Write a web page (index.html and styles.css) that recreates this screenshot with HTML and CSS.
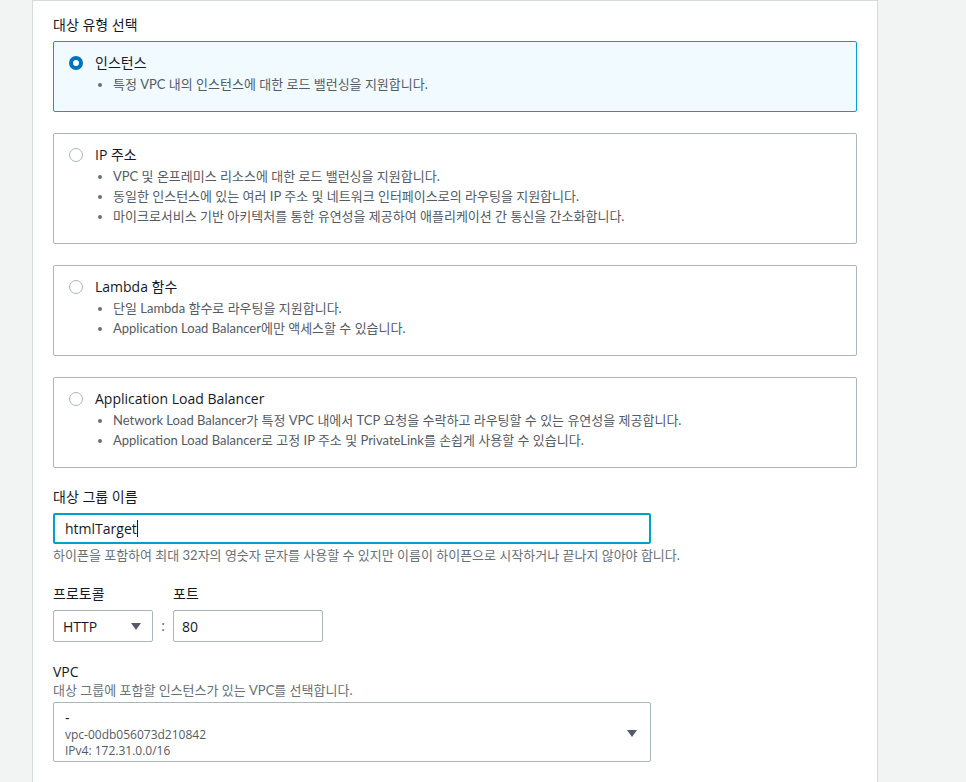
FILE: index.html
```html
<html>
    <head>
        <meta name="viewport" content="width=device-width, initial-scale=1.0">
        <title>대상 그룹 생성</title>
        <link rel="stylesheet" href="styles.css">
    </head>
    <body>
        <div class="panel">
            <div class="section-title">대상 유형 선택</div>
            <div class="tiles">
                <label class="tile selected">
                    <span class="radio"></span>
                    <div class="tile-body">
                        <div class="tile-title">인스턴스</div>
                        <ul>
                            <li>특정 VPC 내의 인스턴스에 대한 로드 밸런싱을 지원합니다.</li>
                        </ul>
                    </div>
                </label>
                <label class="tile">
                    <span class="radio"></span>
                    <div class="tile-body">
                        <div class="tile-title">IP 주소</div>
                        <ul>
                            <li>VPC 및 온프레미스 리소스에 대한 로드 밸런싱을 지원합니다.</li>
                            <li>동일한 인스턴스에 있는 여러 IP 주소 및 네트워크 인터페이스로의 라우팅을 지원합니다.</li>
                            <li>마이크로서비스 기반 아키텍처를 통한 유연성을 제공하여 애플리케이션 간 통신을 간소화합니다.</li>
                        </ul>
                    </div>
                </label>
                <label class="tile">
                    <span class="radio"></span>
                    <div class="tile-body">
                        <div class="tile-title">Lambda 함수</div>
                        <ul>
                            <li>단일 Lambda 함수로 라우팅을 지원합니다.</li>
                            <li>Application Load Balancer에만 액세스할 수 있습니다.</li>
                        </ul>
                    </div>
                </label>
                <label class="tile">
                    <span class="radio"></span>
                    <div class="tile-body">
                        <div class="tile-title">Application Load Balancer</div>
                        <ul>
                            <li>Network Load Balancer가 특정 VPC 내에서 TCP 요청을 수락하고 라우팅할 수 있는 유연성을 제공합니다.</li>
                            <li>Application Load Balancer로 고정 IP 주소 및 PrivateLink를 손쉽게 사용할 수 있습니다.</li>
                        </ul>
                    </div>
                </label>
            </div>

            <div class="field name-field">
                <div class="field-label">대상 그룹 이름</div>
                <div class="text-input focused">htmlTarget<span class="caret"></span></div>
                <div class="hint">하이픈을 포함하여 최대 32자의 영숫자 문자를 사용할 수 있지만 이름이 하이픈으로 시작하거나 끝나지 않아야 합니다.</div>
            </div>

            <div class="field proto-row">
                <div class="proto-col">
                    <div class="field-label">프로토콜</div>
                    <div class="select small-select">
                        <span>HTTP</span>
                        <span class="arrow"></span>
                    </div>
                </div>
                <div class="colon">:</div>
                <div class="port-col">
                    <div class="field-label">포트</div>
                    <div class="text-input port-input">80</div>
                </div>
            </div>

            <div class="field vpc-field">
                <div class="field-label">VPC</div>
                <div class="hint vpc-hint">대상 그룹에 포함할 인스턴스가 있는 VPC를 선택합니다.</div>
                <div class="select vpc-select">
                    <div class="vpc-lines">
                        <div class="vpc-name">-</div>
                        <div class="vpc-sub">vpc-00db056073d210842</div>
                        <div class="vpc-sub">IPv4: 172.31.0.0/16</div>
                    </div>
                    <span class="arrow"></span>
                </div>
            </div>
        </div>
    </body>
</html>
```

FILE: styles.css
```css
html, body{
    margin: 0px;
    padding: 0px;
    height: 100%;
    overflow: hidden;
}
body{
    background-color: #f2f3f3;
    font-family: 'Open Sans', 'Noto Sans CJK KR', sans-serif;
    color: #16191f;
}
.panel{
    margin-left: 32px;
    width: 846px;
    min-height: 100%;
    background-color: white;
    border: 1px solid #d5dbdb;
    border-bottom: none;
    padding: 14px 20px 0px 20px;
    box-sizing: border-box;
}
.section-title{
    font-size: 14px;
    line-height: 20px;
}
.tiles{
    display: flex;
    flex-direction: column;
    gap: 21px;
    margin-top: 6px;
    width: 804px;
}
.tile{
    display: flex;
    align-items: flex-start;
    gap: 12px;
    border: 1px solid #aab7b8;
    border-radius: 2px;
    padding: 10px 15px 17px 15px;
    background-color: white;
}
.tile.selected{
    border-color: #00a1c9;
    background-color: #f1faff;
}
.radio{
    flex: none;
    width: 14px;
    height: 14px;
    margin-top: 4px;
    border: 1px solid #aab7b8;
    border-radius: 50%;
    box-sizing: border-box;
    background-color: white;
}
.tile.selected .radio{
    border: 4px solid #0073bb;
}
.tile-title{
    font-size: 14px;
    line-height: 22px;
}
.tile ul{
    list-style: none;
    margin: 0px;
    padding: 0px;
}
.tile li{
    position: relative;
    font-family: 'Lato', 'Noto Sans CJK KR', sans-serif;
    font-size: 13px;
    line-height: 20px;
    color: #545b64;
    padding-left: 18px;
}
.tile li::before{
    content: '';
    position: absolute;
    left: 3px;
    top: 9px;
    width: 4px;
    height: 4px;
    border-radius: 50%;
    background-color: #687078;
}
.field-label{
    font-size: 14px;
    line-height: 20px;
}
.name-field{
    margin-top: 19px;
}
.text-input{
    box-sizing: border-box;
    border: 1px solid #aab7b8;
    border-radius: 2px;
    font-size: 14px;
    background-color: white;
    display: flex;
    align-items: center;
}
.text-input.focused{
    margin-top: 6px;
    width: 598px;
    height: 31px;
    border: 2px solid #00a1c9;
    padding-left: 10px;
}
.caret{
    display: inline-block;
    width: 1px;
    height: 17px;
    background-color: #16191f;
}
.hint{
    font-family: 'Lato', 'Noto Sans CJK KR', sans-serif;
    font-size: 13px;
    line-height: 16px;
    color: #687078;
}
.name-field .hint{
    margin-top: 3px;
}
.proto-row{
    display: flex;
    align-items: flex-end;
    margin-top: 21px;
}
.select{
    box-sizing: border-box;
    border: 1px solid #aab7b8;
    border-radius: 2px;
    display: flex;
    align-items: center;
    justify-content: space-between;
    background-color: white;
}
.small-select{
    margin-top: 6px;
    width: 100px;
    height: 32px;
    padding: 0px 11px 0px 9px;
    font-size: 14px;
}
.arrow{
    width: 0px;
    height: 0px;
    border-left: 5px solid transparent;
    border-right: 5px solid transparent;
    border-top: 7px solid #545b64;
}
.colon{
    width: 20px;
    height: 32px;
    line-height: 32px;
    text-align: center;
    font-size: 14px;
    color: #545b64;
}
.port-input{
    margin-top: 6px;
    width: 150px;
    height: 32px;
    padding-left: 8px;
}
.vpc-field{
    margin-top: 20px;
}
.vpc-select{
    margin-top: 4px;
    width: 598px;
    height: 60px;
    padding: 5px 13px 2px 11px;
}
.vpc-name{
    font-size: 14px;
    line-height: 18px;
}
.vpc-sub{
    font-size: 12px;
    line-height: 16px;
    color: #545b64;
}
```
